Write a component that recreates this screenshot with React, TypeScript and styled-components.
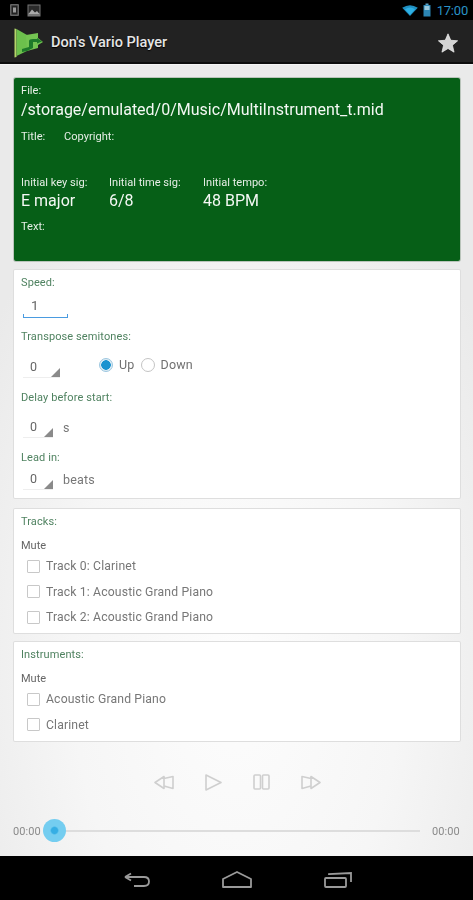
import React from "react";
import styled, { createGlobalStyle } from "styled-components";

const Global = createGlobalStyle`
  html, body { margin: 0; padding: 0; background: #000; }
  body { font-family: Roboto, "Liberation Sans", sans-serif; }
  * { box-sizing: border-box; }
`;

const Screen = styled.div`
  width: 473px; height: 900px; display: flex; flex-direction: column; overflow: hidden;
  filter: blur(0.45px);
`;
const StatusBar = styled.div`
  height: 20px; flex: none; background: #000; display: flex; align-items: center;
  padding: 0 5px 0 10px; gap: 8px;
`;
const StatusRight = styled.div`
  margin-left: auto; display: flex; align-items: center; gap: 5px;
`;
const Clock = styled.span`
  font-size: 13px; color: #2a93c6; letter-spacing: -0.2px; margin-left: 1px;
`;
const ActionBar = styled.div`
  height: 44px; flex: none; background: #222; border-bottom: 2px solid #0c0c0c;
  display: flex; align-items: center; padding: 3px 14px 0 14px;
`;
const AppTitle = styled.div`
  font-size: 14.5px; color: #e6e6e6; margin-left: 7px; font-weight: 500; text-shadow: 0 1px 1px #000;
`;
const StarWrap = styled.div`margin-left: auto; display: flex;`;
const Body = styled.div`
  flex: 1; display: flex; flex-direction: column; padding: 13px 13px 0 14px;
  background: radial-gradient(ellipse 300px 560px at 50% 75%, #fdfdfd 0%, #f6f6f6 55%, #eaeaea 100%);
  border-top: 1px solid #f4f4f4;
`;
const FileCard = styled.div`
  height: 183px; flex: none; background: #065f17; color: #f0f5f0; border-radius: 2px;
  box-shadow: 0 0 0 1px #b9c4ba; padding: 7px 7px; margin-bottom: 9px;
`;
const CardLabel = styled.div`
  font-size: 11.1px; line-height: 12px; color: #e6eee6;
`;
const FilePath = styled.div`
  font-size: 16px; line-height: 19px; margin-top: 3px; color: #f4f8f4; white-space: nowrap;
`;
const TitleRow = styled.div`
  display: flex; margin-top: 12px; height: 46px;
`;
const TitleCell = styled.div<{ $w: number }>`width: ${(p) => p.$w}px; flex: none;`;
const SigRow = styled.div`display: flex;`;
const SigCol = styled.div<{ $w: number }>`width: ${(p) => p.$w}px; flex: none;`;
const SigValue = styled.div`
  font-size: 16px; line-height: 20px; margin-top: 2px; color: #f4f8f4;
`;
const TextLabel = styled(CardLabel)`margin-top: 10px;`;
const Panel = styled.div<{ $h: number; $mb: number }>`
  height: ${(p) => p.$h}px; flex: none; margin-bottom: ${(p) => p.$mb}px; background: #fff;
  border-radius: 1px; box-shadow: 0 0 0 1px #dedede; padding: 7px 7px;
`;
const GreenLabel = styled.div<{ $mt?: number }>`
  font-size: 11px; line-height: 12px; color: #4f8260; letter-spacing: 0.1px; margin-top: ${(p) => p.$mt ?? 0}px;
`;
const SpeedInput = styled.div`
  width: 45px; height: 24px; margin: 5px 0 0 2px; padding: 3px 0 0 8px; font-size: 13.5px; line-height: 17px;
  color: #666; border-bottom: 1px solid #4a9be0; position: relative;
  &::before, &::after { content: ""; position: absolute; bottom: 0; width: 1px; height: 3px; background: #4a9be0; }
  &::before { left: 0; } &::after { right: 0; }
`;
const SpinRow = styled.div<{ $mt: number; $mb: number }>`
  display: flex; align-items: center; margin: ${(p) => p.$mt}px 0 ${(p) => p.$mb}px 2px; height: 22px;
`;
const Spinner = styled.div<{ $w: number }>`
  width: ${(p) => p.$w}px; height: 22px; border-bottom: 1px solid #eee; padding: 3px 0 0 7px;
  font-size: 12.5px; line-height: 16px; color: #666; position: relative; flex: none;
  &::after {
    content: ""; position: absolute; right: 0; bottom: 0; border-style: solid; border-width: 0 0 9px 9px;
    border-color: transparent transparent #8a8a8a transparent;
  }
`;
const Unit = styled.span`font-size: 12.5px; color: #777; margin-left: 10px; letter-spacing: 0.2px;`;
const Radios = styled.div`display: flex; align-items: center; margin-left: 39px; padding-bottom: 5px;`;
const Radio = styled.span<{ $on?: boolean }>`
  width: 14px; height: 14px; border-radius: 50%; flex: none;
  border: 1px solid ${(p) => (p.$on ? "#9cc6df" : "#c4c4c4")};
  background: ${(p) => (p.$on ? "radial-gradient(circle, #1a93d0 0 4.5px, #dcecf5 5px)" : "#fff")};
`;
const RadioText = styled.span`font-size: 12.5px; color: #707070; margin: 0 6px 0 6px; letter-spacing: 0.2px;`;
const Mute = styled.div`font-size: 11px; line-height: 12px; color: #666; margin-top: 12px;`;
const CheckRows = styled.div`display: flex; flex-direction: column; gap: 11.5px; margin: 7px 0 0 6px;`;
const CheckRow = styled.div`display: flex; align-items: center; height: 14px;`;
const Check = styled.span`
  width: 13px; height: 13px; border: 1px solid #c8c8c8; border-radius: 1px; background: #fff; flex: none;
`;
const CheckText = styled.span`font-size: 12.2px; color: #777; margin-left: 6px; letter-spacing: 0.15px;`;
const Transport = styled.div`
  height: 22px; margin-top: 30px; display: flex; justify-content: center; align-items: center;
  gap: 31px; flex: none;
`;
const SeekRow = styled.div`
  margin: 27px -13px 0 -14px; height: 22px; padding: 0 12px 0 13px; display: flex; align-items: center; flex: none;
`;
const Time = styled.span`font-size: 11px; color: #8a8a8a; letter-spacing: 0.1px; width: 29px; flex: none;`;
const Track = styled.div`
  flex: 1; height: 1.5px; background: #ddd; position: relative; margin: 0 12px 0 1px;
`;
const Thumb = styled.div`
  position: absolute; left: 0; top: -11px; width: 23px; height: 23px; border-radius: 50%;
  background: radial-gradient(circle, #35aee4 0 3px, #74cdf0 4.5px);
`;
const NavBar = styled.div`
  height: 44px; flex: none; background: #000; display: flex; justify-content: center; align-items: center;
  gap: 72px; padding: 3px 0 0 2px;
`;

const Soft = styled.svg`display: block; flex: none;`;

const StoreIcon = () => (
  <Soft width="9" height="12" viewBox="0 0 9 12">
    <rect x="0" y="0" width="9" height="12" rx="1" fill="#666" />
    <rect x="1.5" y="1.5" width="6" height="9" fill="#222" />
    <rect x="3" y="3.5" width="3" height="5" fill="#999" />
  </Soft>
);
const PicIcon = () => (
  <Soft width="14" height="13" viewBox="0 0 14 13">
    <rect x="0.5" y="0.5" width="13" height="12" fill="#777" />
    <rect x="1.5" y="1.5" width="11" height="8" fill="#2a2a2a" />
    <path d="M1.5 10 L5 5.5 L8 8.5 L10 7 L12.5 10Z" fill="#aaa" />
  </Soft>
);
const Wifi = () => (
  <Soft width="16" height="11" viewBox="0 0 17 12">
    <path d="M0 3 Q8.5 -2.5 17 3 L8.5 12Z" fill="#1f8fc0" />
    <path d="M3 4.5 Q8.5 1 14 4.5 L8.5 11Z" fill="#2eb0e4" />
  </Soft>
);
const Battery = () => (
  <Soft width="8" height="14" viewBox="0 0 8 14">
    <rect x="2.5" y="0.5" width="3" height="2" fill="#5aa4c8" />
    <rect x="0.5" y="2" width="7" height="11.5" fill="#2c86b4" />
    <rect x="1.5" y="3" width="5" height="4" fill="#9ac8dc" />
  </Soft>
);
const Logo = () => (
  <Soft width="30" height="30" viewBox="0 0 30 30">
    <path d="M0.5 0.5 L2.5 1 L2.5 29 L0.5 29.5Z" fill="#b5d56a" />
    <path d="M2.5 1 L13 7 L13 23 L2.5 28Z" fill="#6cc04c" />
    <path d="M12 7 L24 5 L24 10 L29 14 L24 17 L24 20 L13 23Z" fill="#74c452" />
    <path d="M13 23 L8 24 L8 21 L15 19 L15 13 Q15 11 19 11 L23 11 L23 10 L28 13.5 L23 15.5 L23 14 L19 14 L19 20Z" fill="#1e7a2a" />
  </Soft>
);
const Star = () => (
  <Soft width="22" height="22" viewBox="0 0 24 24">
    <path d="M12 2 L15 9 L22.5 9.6 L16.8 14.4 L18.6 22 L12 18 L5.4 22 L7.2 14.4 L1.5 9.6 L9 9Z" fill="#d4d4d4" stroke="#f0f0f0" strokeWidth="0.8" strokeLinejoin="round" />
  </Soft>
);
const stroke = { fill: "none", stroke: "#cfcfcf", strokeWidth: 1.6, strokeLinejoin: "round" as const };
const Rewind = () => (
  <Soft width="20" height="15" viewBox="0 0 20 15">
    <path d="M1 7.5 L10 1.5 L10 13.5Z M10 3.5 L19 1.5 L19 13.5 L10 11" {...stroke} />
  </Soft>
);
const Play = () => (
  <Soft width="17" height="17" viewBox="0 0 17 17">
    <path d="M1 1 L16 8.5 L1 16Z" {...stroke} />
  </Soft>
);
const Pause = () => (
  <Soft width="17" height="16" viewBox="0 0 17 16">
    <rect x="1" y="1" width="6.5" height="14" rx="1" {...stroke} />
    <rect x="9.5" y="1" width="6.5" height="14" rx="1" {...stroke} />
  </Soft>
);
const Forward = () => (
  <Soft width="20" height="15" viewBox="0 0 20 15">
    <path d="M19 7.5 L10 1.5 L10 13.5Z M10 3.5 L1 1.5 L1 13.5 L10 11" {...stroke} />
  </Soft>
);
const nav = { fill: "none", stroke: "#9a9a9a", strokeWidth: 1.8 };
const Back = () => (
  <Soft width="26" height="15" viewBox="0 0 26 15">
    <path d="M1 5 L7 1.5 M1 5 L7 8.5 M1 5 L20 5 Q25 5 25 9.5 Q25 14 20 14 L10 14" {...nav} />
  </Soft>
);
const Home = () => (
  <Soft width="30" height="17" viewBox="0 0 30 17">
    <path d="M1 8 L15 1 L29 8 L29 16 L1 16Z" {...nav} strokeLinejoin="round" />
  </Soft>
);
const Recent = () => (
  <Soft width="28" height="16" viewBox="0 0 28 16">
    <rect x="1" y="6" width="21" height="9" rx="1" {...nav} />
    <path d="M5 3 L5 2 L27 1 L27 10" {...nav} />
  </Soft>
);

const CheckItem = ({ label }: { label: string }) => (
  <CheckRow>
    <Check />
    <CheckText>{label}</CheckText>
  </CheckRow>
);

export default function App() {
  return (
    <Screen>
      <Global />
      <StatusBar>
        <StoreIcon />
        <PicIcon />
        <StatusRight>
          <Wifi />
          <Battery />
          <Clock>17:00</Clock>
        </StatusRight>
      </StatusBar>
      <ActionBar>
        <Logo />
        <AppTitle>Don's Vario Player</AppTitle>
        <StarWrap><Star /></StarWrap>
      </ActionBar>
      <Body>
        <FileCard>
          <CardLabel>File:</CardLabel>
          <FilePath>/storage/emulated/0/Music/MultiInstrument_t.mid</FilePath>
          <TitleRow>
            <TitleCell $w={43}><CardLabel>Title:</CardLabel></TitleCell>
            <TitleCell $w={80}><CardLabel>Copyright:</CardLabel></TitleCell>
          </TitleRow>
          <SigRow>
            <SigCol $w={88}><CardLabel>Initial key sig:</CardLabel><SigValue>E major</SigValue></SigCol>
            <SigCol $w={94}><CardLabel>Initial time sig:</CardLabel><SigValue>6/8</SigValue></SigCol>
            <SigCol $w={100}><CardLabel>Initial tempo:</CardLabel><SigValue>48 BPM</SigValue></SigCol>
          </SigRow>
          <TextLabel>Text:</TextLabel>
        </FileCard>
        <Panel $h={228} $mb={11}>
          <GreenLabel>Speed:</GreenLabel>
          <SpeedInput>1</SpeedInput>
          <GreenLabel $mt={13}>Transpose semitones:</GreenLabel>
          <SpinRow $mt={13} $mb={14}>
            <Spinner $w={37}>0</Spinner>
            <Radios>
              <Radio $on />
              <RadioText>Up</RadioText>
              <Radio />
              <RadioText>Down</RadioText>
            </Radios>
          </SpinRow>
          <GreenLabel>Delay before start:</GreenLabel>
          <SpinRow $mt={12} $mb={14}>
            <Spinner $w={30}>0</Spinner>
            <Unit>s</Unit>
          </SpinRow>
          <GreenLabel>Lead in:</GreenLabel>
          <SpinRow $mt={4} $mb={0}>
            <Spinner $w={30}>0</Spinner>
            <Unit>beats</Unit>
          </SpinRow>
        </Panel>
        <Panel $h={124} $mb={9}>
          <GreenLabel>Tracks:</GreenLabel>
          <Mute>Mute</Mute>
          <CheckRows>
            <CheckItem label="Track 0: Clarinet" />
            <CheckItem label="Track 1: Acoustic Grand Piano" />
            <CheckItem label="Track 2: Acoustic Grand Piano" />
          </CheckRows>
        </Panel>
        <Panel $h={99} $mb={0}>
          <GreenLabel>Instruments:</GreenLabel>
          <Mute>Mute</Mute>
          <CheckRows>
            <CheckItem label="Acoustic Grand Piano" />
            <CheckItem label="Clarinet" />
          </CheckRows>
        </Panel>
        <Transport>
          <Rewind />
          <Play />
          <Pause />
          <Forward />
        </Transport>
        <SeekRow>
          <Time>00:00</Time>
          <Track><Thumb /></Track>
          <Time>00:00</Time>
        </SeekRow>
      </Body>
      <NavBar>
        <Back />
        <Home />
        <Recent />
      </NavBar>
    </Screen>
  );
}
